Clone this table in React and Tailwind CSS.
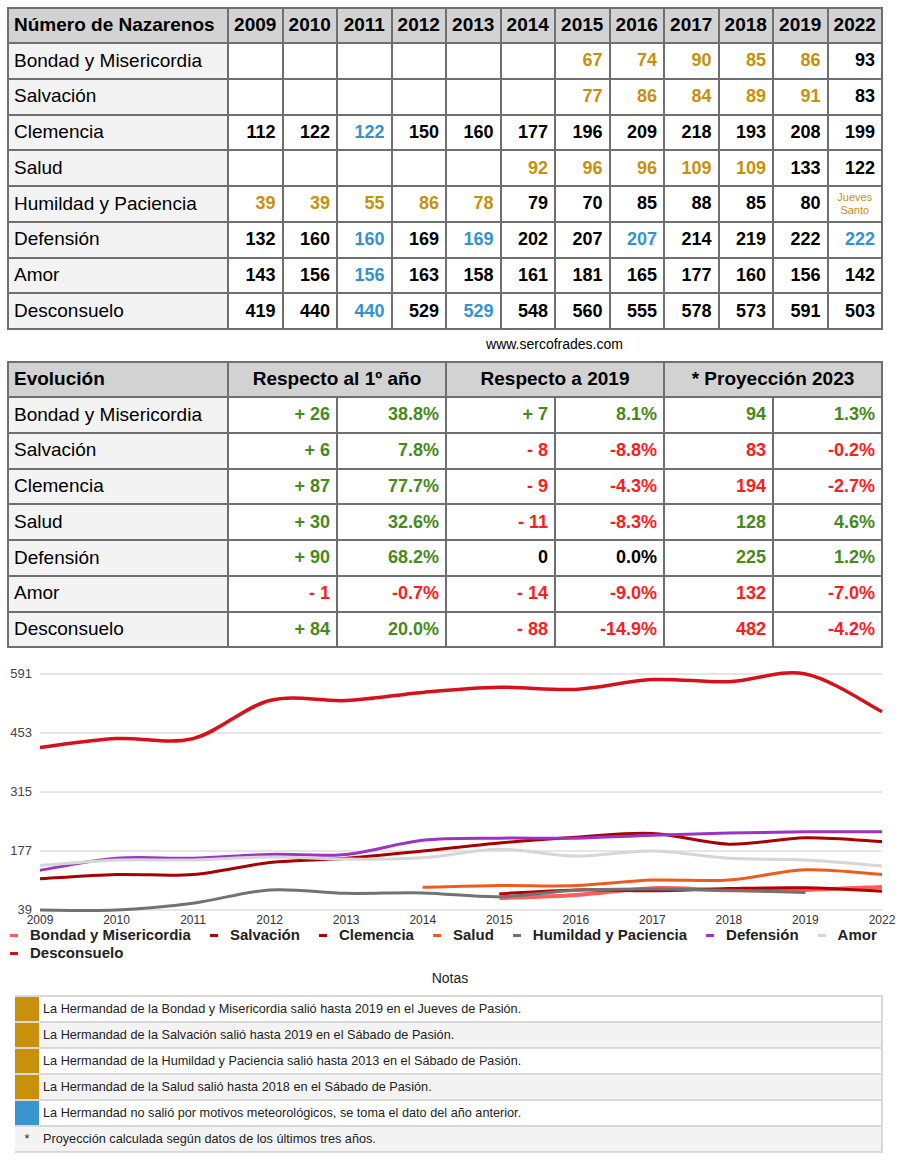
import React from "react";

const G = "g", B = "b", R = "r", K = "k";
const years = ["2009","2010","2011","2012","2013","2014","2015","2016","2017","2018","2019","2022"];

const table1 = [
  ["Bondad y Misericordia", [null,null,null,null,null,null,[67,G],[74,G],[90,G],[85,G],[86,G],[93,K]]],
  ["Salvación", [null,null,null,null,null,null,[77,G],[86,G],[84,G],[89,G],[91,G],[83,K]]],
  ["Clemencia", [[112,K],[122,K],[122,B],[150,K],[160,K],[177,K],[196,K],[209,K],[218,K],[193,K],[208,K],[199,K]]],
  ["Salud", [null,null,null,null,null,[92,G],[96,G],[96,G],[109,G],[109,G],[133,K],[122,K]]],
  ["Humildad y Paciencia", [[39,G],[39,G],[55,G],[86,G],[78,G],[79,K],[70,K],[85,K],[88,K],[85,K],[80,K],"JS"]],
  ["Defensión", [[132,K],[160,K],[160,B],[169,K],[169,B],[202,K],[207,K],[207,B],[214,K],[219,K],[222,K],[222,B]]],
  ["Amor", [[143,K],[156,K],[156,B],[163,K],[158,K],[161,K],[181,K],[165,K],[177,K],[160,K],[156,K],[142,K]]],
  ["Desconsuelo", [[419,K],[440,K],[440,B],[529,K],[529,B],[548,K],[560,K],[555,K],[578,K],[573,K],[591,K],[503,K]]],
];

const table2 = [
  ["Bondad y Misericordia", [["+ 26",G],["38.8%",G],["+ 7",G],["8.1%",G],["94",G],["1.3%",G]]],
  ["Salvación", [["+ 6",G],["7.8%",G],["- 8",R],["-8.8%",R],["83",R],["-0.2%",R]]],
  ["Clemencia", [["+ 87",G],["77.7%",G],["- 9",R],["-4.3%",R],["194",R],["-2.7%",R]]],
  ["Salud", [["+ 30",G],["32.6%",G],["- 11",R],["-8.3%",R],["128",G],["4.6%",G]]],
  ["Defensión", [["+ 90",G],["68.2%",G],["0",K],["0.0%",K],["225",G],["1.2%",G]]],
  ["Amor", [["- 1",R],["-0.7%",R],["- 14",R],["-9.0%",R],["132",R],["-7.0%",R]]],
  ["Desconsuelo", [["+ 84",G],["20.0%",G],["- 88",R],["-14.9%",R],["482",R],["-4.2%",R]]],
];

const colorClass = {
  g: "text-[#c8900b]",
  b: "text-[#3393d0]",
  k: "text-black",
};
const evoClass = {
  g: "text-[#468a1c]",
  r: "text-[#ff1c1c]",
  k: "text-black",
};

const series = [
  { name: "Bondad y Misericordia", color: "#ff5c5c", w: 4, data: [null,null,null,null,null,null,67,74,90,85,86,93] },
  { name: "Salvación", color: "#b30000", w: 3, data: [null,null,null,null,null,null,77,86,84,89,91,83] },
  { name: "Clemencia", color: "#a80000", w: 3, data: [112,122,122,150,160,177,196,209,218,193,208,199] },
  { name: "Salud", color: "#ee5b1c", w: 3, data: [null,null,null,null,null,92,96,96,109,109,133,122] },
  { name: "Humildad y Paciencia", color: "#727272", w: 3, data: [39,39,55,86,78,79,70,85,88,85,80,null] },
  { name: "Defensión", color: "#9b33c4", w: 3, data: [132,160,160,169,169,202,207,207,214,219,222,222] },
  { name: "Amor", color: "#d6d6d6", w: 3, data: [143,156,156,163,158,161,181,165,177,160,156,142] },
  { name: "Desconsuelo", color: "#d8101c", w: 3.5, data: [419,440,440,529,529,548,560,555,578,573,591,503] },
];

const X0 = 40, X1 = 882;
const xs = (i) => X0 + (i * (X1 - X0)) / 11;
const YTOP = 13, YBOT = 249;
const ys = (v) => YBOT - ((v - 39) * (YBOT - YTOP)) / (591 - 39);

function smoothPath(pts) {
  if (pts.length < 2) return "";
  const k = 1 / 6;
  let d = `M${pts[0][0].toFixed(1)},${pts[0][1].toFixed(1)}`;
  for (let i = 0; i < pts.length - 1; i++) {
    const p0 = pts[i - 1] || pts[i];
    const p1 = pts[i];
    const p2 = pts[i + 1];
    const p3 = pts[i + 2] || p2;
    const c1x = p1[0] + (p2[0] - p0[0]) * k;
    const c1y = p1[1] + (p2[1] - p0[1]) * k;
    const c2x = p2[0] - (p3[0] - p1[0]) * k;
    const c2y = p2[1] - (p3[1] - p1[1]) * k;
    d += ` C${c1x.toFixed(1)},${c1y.toFixed(1)} ${c2x.toFixed(1)},${c2y.toFixed(1)} ${p2[0].toFixed(1)},${p2[1].toFixed(1)}`;
  }
  return d;
}

function Chart() {
  const grid = [591, 453, 315, 177, 39];
  return (
    <svg width="900" height="265" viewBox="0 0 900 265" className="block">
      {grid.map((g) => (
        <g key={g}>
          <line x1={X0} x2={X1} y1={ys(g)} y2={ys(g)} stroke="#cccccc" strokeWidth="1" />
          <text x="32" y={ys(g) + 4} textAnchor="end" fontSize="13" fill="#444" fontFamily="Liberation Sans, Arial, sans-serif">{g}</text>
        </g>
      ))}
      {series.map((s) => {
        const pts = [];
        s.data.forEach((v, i) => { if (v != null) pts.push([xs(i), ys(v)]); });
        return <path key={s.name} d={smoothPath(pts)} fill="none" stroke={s.color} strokeWidth={s.w} strokeLinecap="butt" />;
      })}
      {years.map((y, i) => (
        <text key={y} x={xs(i)} y="263" textAnchor="middle" fontSize="12" fill="#333" fontFamily="Liberation Sans, Arial, sans-serif">{y}</text>
      ))}
    </svg>
  );
}

const notes = [
  ["gold", "La Hermandad de la Bondad y Misericordia salió hasta 2019 en el Jueves de Pasión."],
  ["gold", "La Hermandad de la Salvación salió hasta 2019 en el Sábado de Pasión."],
  ["gold", "La Hermandad de la Humildad y Paciencia salió hasta 2013 en el Sábado de Pasión."],
  ["gold", "La Hermandad de la Salud salió hasta 2018 en el Sábado de Pasión."],
  ["blue", "La Hermandad no salió por motivos meteorológicos, se toma el dato del año anterior."],
  ["star", "Proyección calculada según datos de los últimos tres años."],
];

export default function App() {
  const cell = "border-2 border-[#6f6f6f]";
  return (
    <div className="w-[900px] bg-white text-black font-['Liberation_Sans',Arial,sans-serif]">
      <div className="pt-[7px] pl-[7px]">
        <table className="border-collapse table-fixed w-[876px]">
          <colgroup>
            <col className="w-[220px]" />
            {years.map((y) => <col key={y} />)}
          </colgroup>
          <thead>
            <tr className="h-[35px] bg-[#d2d2d2]">
              <th className={`${cell} text-left pl-[5px] text-[19px] font-bold`}>Número de Nazarenos</th>
              {years.map((y) => (
                <th key={y} className={`${cell} text-center text-[19px] font-bold`}>{y}</th>
              ))}
            </tr>
          </thead>
          <tbody>
            {table1.map(([name, vals]) => (
              <tr key={name} className="h-[35.75px]">
                <td className={`${cell} bg-[#f3f3f3] pl-[5px] text-[19px]`}>{name}</td>
                {vals.map((v, i) => (
                  <td key={i} className={`${cell} text-right pr-[6px] text-[18px] font-bold`}>
                    {v === "JS" ? (
                      <div className="text-center text-[11px] leading-[13px] font-normal text-[#c8900b] -mr-[6px]">Jueves<br />Santo</div>
                    ) : v ? (
                      <span className={colorClass[v[1]]}>{v[0]}</span>
                    ) : null}
                  </td>
                ))}
              </tr>
            ))}
          </tbody>
        </table>
      </div>

      <div className="ml-[227px] w-[655px] mt-[6px] text-center text-[14px] leading-[16px]">www.sercofrades.com</div>

      <div className="pl-[7px] mt-[9px]">
        <table className="border-collapse table-fixed w-[876px]">
          <colgroup>
            <col className="w-[220px]" />
            <col /><col /><col /><col /><col /><col />
          </colgroup>
          <thead>
            <tr className="h-[35px] bg-[#d2d2d2]">
              <th className={`${cell} text-left pl-[5px] text-[19px] font-bold`}>Evolución</th>
              <th colSpan={2} className={`${cell} text-center text-[19px] font-bold`}>Respecto al 1º año</th>
              <th colSpan={2} className={`${cell} text-center text-[19px] font-bold`}>Respecto a 2019</th>
              <th colSpan={2} className={`${cell} text-center text-[19px] font-bold`}>* Proyección 2023</th>
            </tr>
          </thead>
          <tbody>
            {table2.map(([name, vals]) => (
              <tr key={name} className="h-[35.75px]">
                <td className={`${cell} bg-[#f3f3f3] pl-[5px] text-[19px]`}>{name}</td>
                {vals.map((v, i) => (
                  <td key={i} className={`${cell} text-right pr-[6px] text-[18px] font-bold ${evoClass[v[1]]}`}>{v[0]}</td>
                ))}
              </tr>
            ))}
          </tbody>
        </table>
      </div>

      <div className="mt-[13px]">
        <Chart />
      </div>

      <div className="flex flex-wrap pl-[10px] w-[890px] gap-x-[19px] text-[15px] leading-[18px] font-bold text-[#222]">
        {series.map((s) => (
          <div key={s.name} className="flex items-center">
            <svg width="8" height="3" className="mr-[12px]"><rect width="8" height="3" fill={s.color} /></svg>
            <span>{s.name}</span>
          </div>
        ))}
      </div>

      <div className="mt-[7px] text-center text-[14px] leading-[18px] text-[#222]">Notas</div>

      <div className="ml-[15px] mt-[8px] w-[868px] border-t-2 border-r-2 border-[#d9d9d9] text-[12.7px] text-[#222]">
        {notes.map(([kind, text], i) => (
          <div key={i} className={`flex h-[26px] border-b-2 border-[#d9d9d9] ${i % 2 === 1 ? "bg-[#f3f3f3]" : "bg-white"}`}>
            <div className={`w-[24px] flex items-center justify-center ${kind === "gold" ? "bg-[#c8900b]" : kind === "blue" ? "bg-[#3a95cf]" : ""}`}>
              {kind === "star" ? "*" : ""}
            </div>
            <div className="flex items-center pl-[4px]">{text}</div>
          </div>
        ))}
      </div>
      <div className="h-[9px]" />
    </div>
  );
}
